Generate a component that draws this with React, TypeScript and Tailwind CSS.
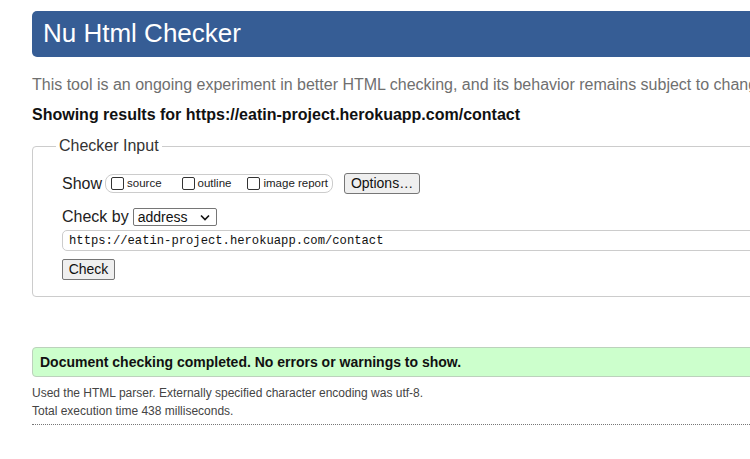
const sans = "font-['Liberation_Sans',Arial,sans-serif]";

function Box() {
  return <span className="inline-block h-[13px] w-[13px] shrink-0 rounded-[2px] border border-[#333] bg-white" />;
}

function ShowOption({ label, className }: { label: string; className?: string }) {
  return (
    <span className={`flex items-center ${className ?? ''}`}>
      <Box />
      <span className="ml-[3px] text-[11.5px] leading-[13px] text-[#222]">{label}</span>
    </span>
  );
}

export default function App() {
  return (
    <div className={`h-[459px] w-[750px] overflow-hidden bg-white ${sans}`}>
      <div className="w-[840px] pl-[32px] pt-[11px]">
        <h1 className="h-[46px] rounded-l-[5px] bg-[#365d95] pl-[11px] text-[26px] leading-[44px] text-white">
          Nu Html Checker
        </h1>

        <p className="mt-[19px] whitespace-nowrap text-[16px] leading-[18px] text-[#6f6f6f]">
          This tool is an ongoing experiment in better HTML checking, and its behavior remains subject to change
        </p>
        <p className="mt-[12px] text-[16px] font-bold leading-[18px] text-[#111]">
          Showing results for https://eatin-project.herokuapp.com/contact
        </p>

        <fieldset className="mt-[13px] rounded-l-[4px] border border-[#cccccc] pb-[16px] pl-[29px] pt-[18px]">
          <legend className="-ml-[6px] px-[3px] text-[16px] leading-[18px] text-[#333]">Checker Input</legend>

          <div className="flex h-[21px] items-center text-[#222]">
            <span className="text-[16px]">Show</span>
            <span className="ml-[3px] flex h-[19px] w-[228px] items-center rounded-[8px] border border-[#cccccc] pl-[5px]">
              <ShowOption label="source" />
              <ShowOption label="outline" className="ml-[20px]" />
              <ShowOption label="image report" className="ml-[16px]" />
            </span>
            <button className="ml-[11px] h-[21px] w-[76px] rounded-[3px] border border-[#767676] bg-[#efefef] text-[14px] leading-[19px] text-[#111]">
              Options…
            </button>
          </div>

          <div className="mt-[14px] flex h-[18px] items-center text-[#222]">
            <span className="text-[16px]">Check by</span>
            <span className="ml-[4px] flex h-[18px] w-[84px] items-center justify-between rounded-[2px] border border-[#767676] bg-white pl-[4px] pr-[6px] text-[14px] text-[#111]">
              address
              <svg width="10" height="7" viewBox="0 0 10 7" className="mt-[1px]">
                <path d="M1 1.5l4 4 4-4" fill="none" stroke="#111" strokeWidth="1.6" />
              </svg>
            </span>
          </div>

          <div className="mt-[4px] flex h-[21px] items-center rounded-l-[5px] border border-[#cccccc] pl-[6px] pt-[1px] font-['Liberation_Mono','DejaVu_Sans_Mono',monospace] text-[12.2px] text-[#111]">
            https://eatin-project.herokuapp.com/contact
          </div>

          <button className="mt-[8px] block h-[21px] w-[53px] rounded-[2px] border border-[#767676] bg-[#efefef] text-[14px] leading-[19px] text-[#111]">
            Check
          </button>
        </fieldset>

        <div className="mt-[50px] h-[30px] rounded-l-[4px] border border-[#bcd2bc] bg-[#ccffcc] pl-[7px] text-[14px] font-bold leading-[28px] text-[#111]">
          Document checking completed. No errors or warnings to show.
        </div>

        <p className="mt-[7px] text-[12px] leading-[18px] text-[#444]">
          Used the HTML parser. Externally specified character encoding was utf-8.
        </p>
        <p className="text-[12px] leading-[18px] text-[#444]">Total execution time 438 milliseconds.</p>

        <div className="mt-[4px] border-t border-dotted border-[#777]" />
      </div>
    </div>
  );
}
